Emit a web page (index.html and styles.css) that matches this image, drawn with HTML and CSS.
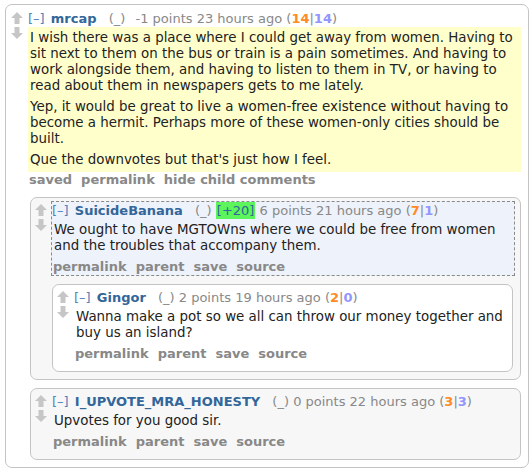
FILE: index.html
```html
<!DOCTYPE html>
<html lang="en">
<head>
  <meta charset="UTF-8" />
  <title>Comments</title>
  <link rel="stylesheet" href="styles.css">
</head>
<body>

  <div class="comment top">
    <div class="midcol">
      <svg class="arrow" width="12" height="12" viewBox="0 0 12 12"><path d="M6 0 L12 6 H8.5 V12 H3.5 V6 H0 Z"/></svg>
      <svg class="arrow" width="12" height="12" viewBox="0 0 12 12"><path d="M3.5 0 H8.5 V6 H12 L6 12 L0 6 H3.5 Z"/></svg>
    </div>
    <div class="col">
      <div class="entry">
        <p class="tagline">
          <span class="expand">[–]</span> <span class="author">mrcap</span> <span class="attrs">(_)</span><span class="spacer"></span> -1 points 23 hours ago
          (<span class="up">14</span>|<span class="down">14</span>)
        </p>
        <div class="md yellow">
          <p>I wish there was a place where I could get away from women. Having to sit next to them on the bus or train is a pain sometimes. And having to work alongside them, and having to listen to them in TV, or having to read about them in newspapers gets to me lately.</p>
          <p>Yep, it would be great to live a women-free existence without having to become a hermit. Perhaps more of these women-only cities should be built.</p>
          <p>Que the downvotes but that's just how I feel.</p>
        </div>
        <ul class="buttons">
          <li>saved</li>
          <li>permalink</li>
          <li>hide child comments</li>
        </ul>
      </div>

      <div class="children">
        <div class="comment even parent">
          <div class="midcol">
            <svg class="arrow" width="12" height="12" viewBox="0 0 12 12"><path d="M6 0 L12 6 H8.5 V12 H3.5 V6 H0 Z"/></svg>
            <svg class="arrow" width="12" height="12" viewBox="0 0 12 12"><path d="M3.5 0 H8.5 V6 H12 L6 12 L0 6 H3.5 Z"/></svg>
          </div>
          <div class="col">
            <div class="entry target">
              <p class="tagline">
                <span class="expand">[–]</span> <span class="author">SuicideBanana</span> <span class="attrs">(_)</span> <span class="tag">[+20]</span> 6 points 21 hours ago
                (<span class="up">7</span>|<span class="down">1</span>)
              </p>
              <div class="md">
                <p>We ought to have MGTOWns where we could be free from women and the troubles that accompany them.</p>
              </div>
              <ul class="buttons">
                <li>permalink</li>
                <li>parent</li>
                <li>save</li>
                <li>source</li>
              </ul>
            </div>

            <div class="children">
              <div class="comment odd">
                <div class="midcol">
                  <svg class="arrow" width="12" height="12" viewBox="0 0 12 12"><path d="M6 0 L12 6 H8.5 V12 H3.5 V6 H0 Z"/></svg>
                  <svg class="arrow" width="12" height="12" viewBox="0 0 12 12"><path d="M3.5 0 H8.5 V6 H12 L6 12 L0 6 H3.5 Z"/></svg>
                </div>
                <div class="col">
                  <div class="entry">
                    <p class="tagline">
                      <span class="expand">[–]</span> <span class="author">Gingor</span> <span class="attrs">(_)</span> 2 points 19 hours ago
                      (<span class="up">2</span>|<span class="down">0</span>)
                    </p>
                    <div class="md">
                      <p>Wanna make a pot so we all can throw our money together and buy us an island?</p>
                    </div>
                    <ul class="buttons">
                      <li>permalink</li>
                      <li>parent</li>
                      <li>save</li>
                      <li>source</li>
                    </ul>
                  </div>
                </div>
              </div>
            </div>
          </div>
        </div>

        <div class="comment even">
          <div class="midcol">
            <svg class="arrow" width="12" height="12" viewBox="0 0 12 12"><path d="M6 0 L12 6 H8.5 V12 H3.5 V6 H0 Z"/></svg>
            <svg class="arrow" width="12" height="12" viewBox="0 0 12 12"><path d="M3.5 0 H8.5 V6 H12 L6 12 L0 6 H3.5 Z"/></svg>
          </div>
          <div class="col">
            <div class="entry">
              <p class="tagline">
                <span class="expand">[–]</span> <span class="author">I_UPVOTE_MRA_HONESTY</span> <span class="attrs">(_)</span> 0 points 22 hours ago
                (<span class="up">3</span>|<span class="down">3</span>)
              </p>
              <div class="md">
                <p>Upvotes for you good sir.</p>
              </div>
              <ul class="buttons">
                <li>permalink</li>
                <li>parent</li>
                <li>save</li>
                <li>source</li>
              </ul>
            </div>
          </div>
        </div>
      </div>
    </div>
  </div>

</body>
</html>
```

FILE: styles.css
```css
body {
  margin: 4px 3px 0 5px;
  font-family: "DejaVu Sans", Verdana, sans-serif;
  font-size: 13px;
  color: #222;
  background: #fff;
}

.comment {
  display: flex;
  border: 1px solid #c4c4c4;
  border-radius: 7px;
  padding: 3px 5px 8px 3px;
  background: #fff;
}

.comment.top {
  padding: 4px 6px 7px 4px;
}

.comment.parent {
  padding-bottom: 7px;
}

.comment.even {
  background: #f7f7f8;
}

.comment.odd {
  background: #fff;
}

.midcol {
  width: 17px;
  flex-shrink: 0;
  display: flex;
  flex-direction: column;
  gap: 3px;
  padding-top: 3px;
}

.arrow {
  display: block;
  margin-left: 1px;
  fill: #c6c6c6;
}

.col {
  flex: 1;
  min-width: 0;
}

.entry {
  border: 1px solid transparent;
}

.entry.target {
  border: 1px dashed #8a8a8a;
  background: #eef2fb;
}

.tagline {
  margin: 0;
  line-height: 17px;
  color: #888;
  white-space: nowrap;
}

.expand {
  color: #4f82bb;
  margin-right: 2px;
}

.author {
  color: #336699;
  font-weight: bold;
  margin-right: 8px;
}

.spacer {
  display: inline-block;
  width: 6px;
}

.tag {
  background: #5cf55c;
  color: #336699;
  padding: 1px 1px;
}

.up {
  color: #ff8b24;
  font-weight: bold;
}

.down {
  color: #9494ff;
  font-weight: bold;
}

.md {
  padding: 3px 1px 5px 2px;
  font-size: 13.4px;
  line-height: 16px;
}

.md.yellow {
  padding: 3px 3px 4px 2px;
  background: #ffffcc;
}

.md p {
  margin: 0 0 5px;
}

.md p:last-child {
  margin-bottom: 0;
}

.buttons {
  display: flex;
  gap: 9px;
  list-style: none;
  margin: 0;
  padding: 0 0 0 1px;
  line-height: 16px;
  font-weight: bold;
  color: #888;
}

.children {
  margin: 8px 2px 0 1px;
  display: flex;
  flex-direction: column;
  gap: 8px;
}

.top > .col > .children {
  margin: 8px 1px 0 3px;
}
```
